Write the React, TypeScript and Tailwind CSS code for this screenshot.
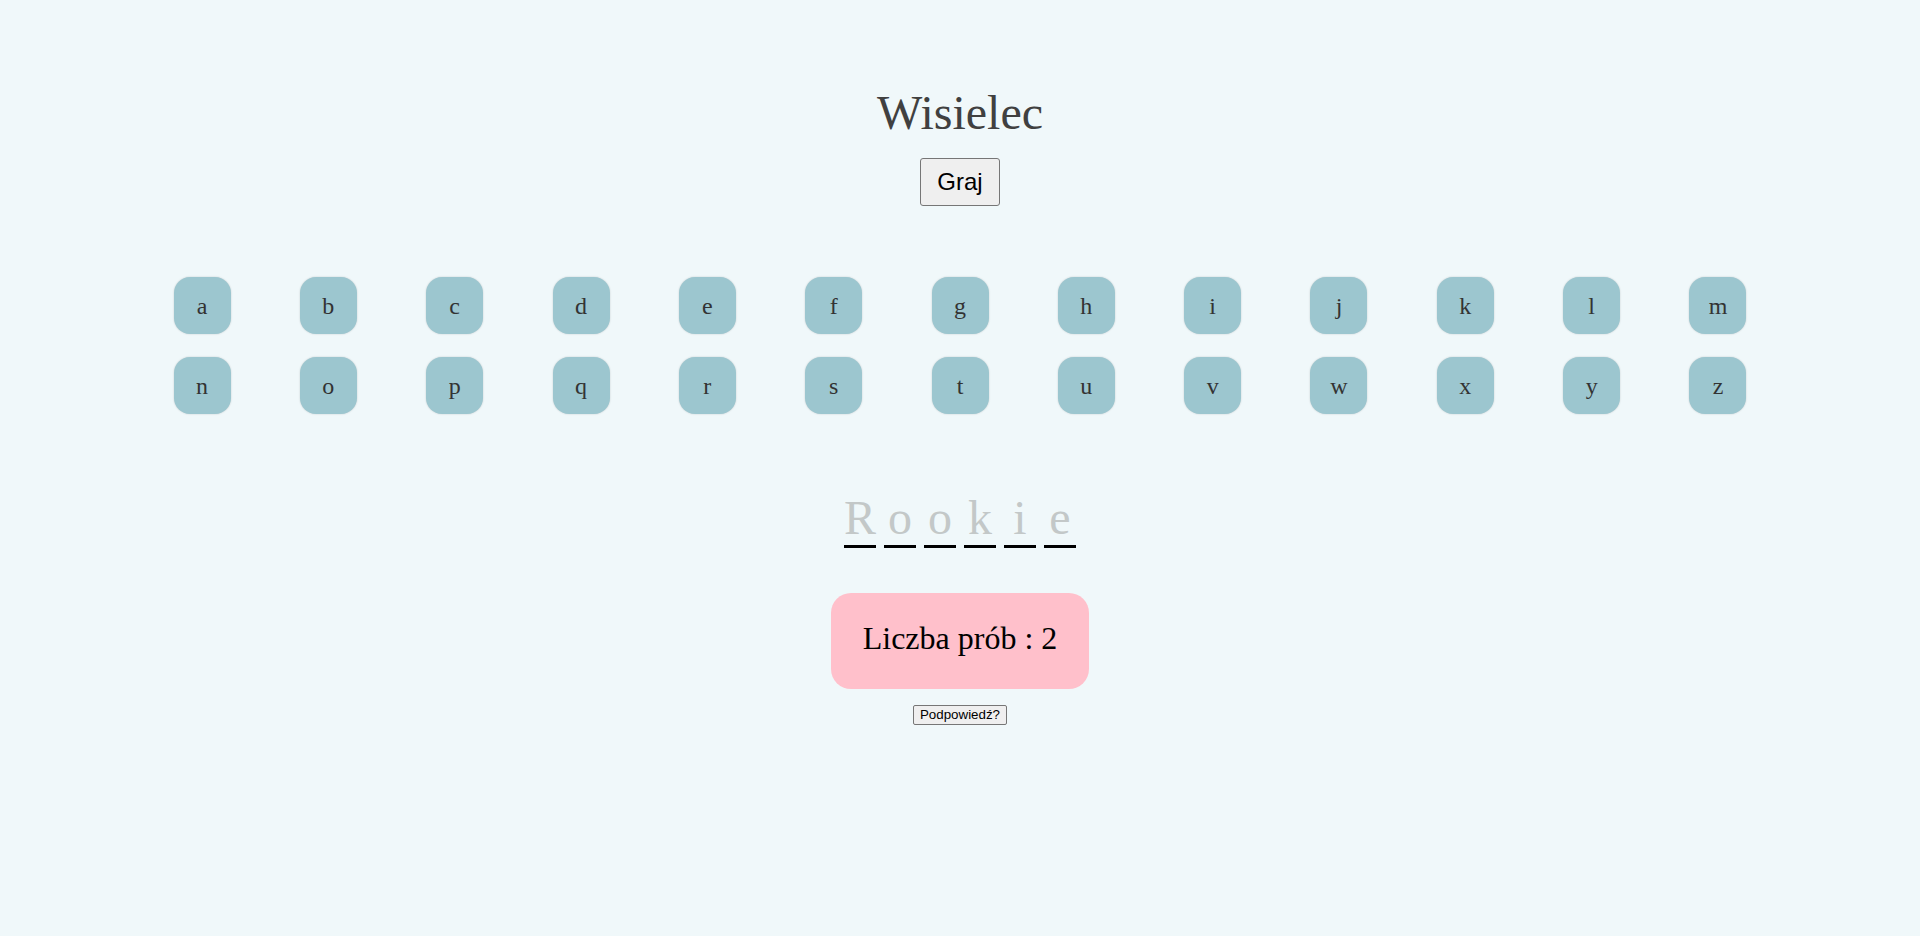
const rows = [
  ["a", "b", "c", "d", "e", "f", "g", "h", "i", "j", "k", "l", "m"],
  ["n", "o", "p", "q", "r", "s", "t", "u", "v", "w", "x", "y", "z"],
];

const word = ["R", "o", "o", "k", "i", "e"];

export default function App() {
  return (
    <div className="min-h-[936px] w-full bg-[#f0f8fa] font-['Liberation_Serif',serif]">
      <div className="flex flex-col items-center pt-[85px]">
        {/* ── Title ── */}
        <h1 className="text-[48px] leading-[55px] text-[#404040]">Wisielec</h1>
        <button
          type="button"
          className="mt-[18px] h-[48px] w-[80px] rounded-[3px] border border-[#767676] bg-[#efefef] font-['Liberation_Sans',Arial,sans-serif] text-[24px] text-black"
        >
          Graj
        </button>

        {/* ── Keyboard ── */}
        <div className="mt-[71px] grid grid-cols-[repeat(13,57px)] gap-x-[69.33px] gap-y-[23px]">
          {rows.flat().map((ch) => (
            <button
              key={ch}
              type="button"
              className="flex h-[57px] w-[57px] items-center justify-center rounded-[16px] bg-[#9cc6cf] text-[24px] leading-none text-[#333] shadow-[0_0_2px_rgba(0,0,0,0.18)]"
            >
              {ch}
            </button>
          ))}
        </div>

        {/* ── Word ── */}
        <div className="mt-[76px] flex gap-[8px]">
          {word.map((ch, i) => (
            <span
              key={i}
              className="inline-block w-[32px] border-b-[3px] border-black text-center text-[48px] leading-[55px] text-[#c3c8c8]"
            >
              {ch}
            </span>
          ))}
        </div>

        {/* ── Tries ── */}
        <div className="mt-[45px] h-[96px] w-[258px] rounded-[20px] bg-[#ffc0cb] pt-[27px] text-center text-[32px] leading-[37px] text-black">
          Liczba prób : 2
        </div>

        <button
          type="button"
          className="mt-[16px] h-[20px] rounded-[2px] border border-[#767676] bg-[#efefef] px-[6px] font-['Liberation_Sans',Arial,sans-serif] text-[13.333px] leading-[16px] text-black"
        >
          Podpowiedź?
        </button>
      </div>
    </div>
  );
}
